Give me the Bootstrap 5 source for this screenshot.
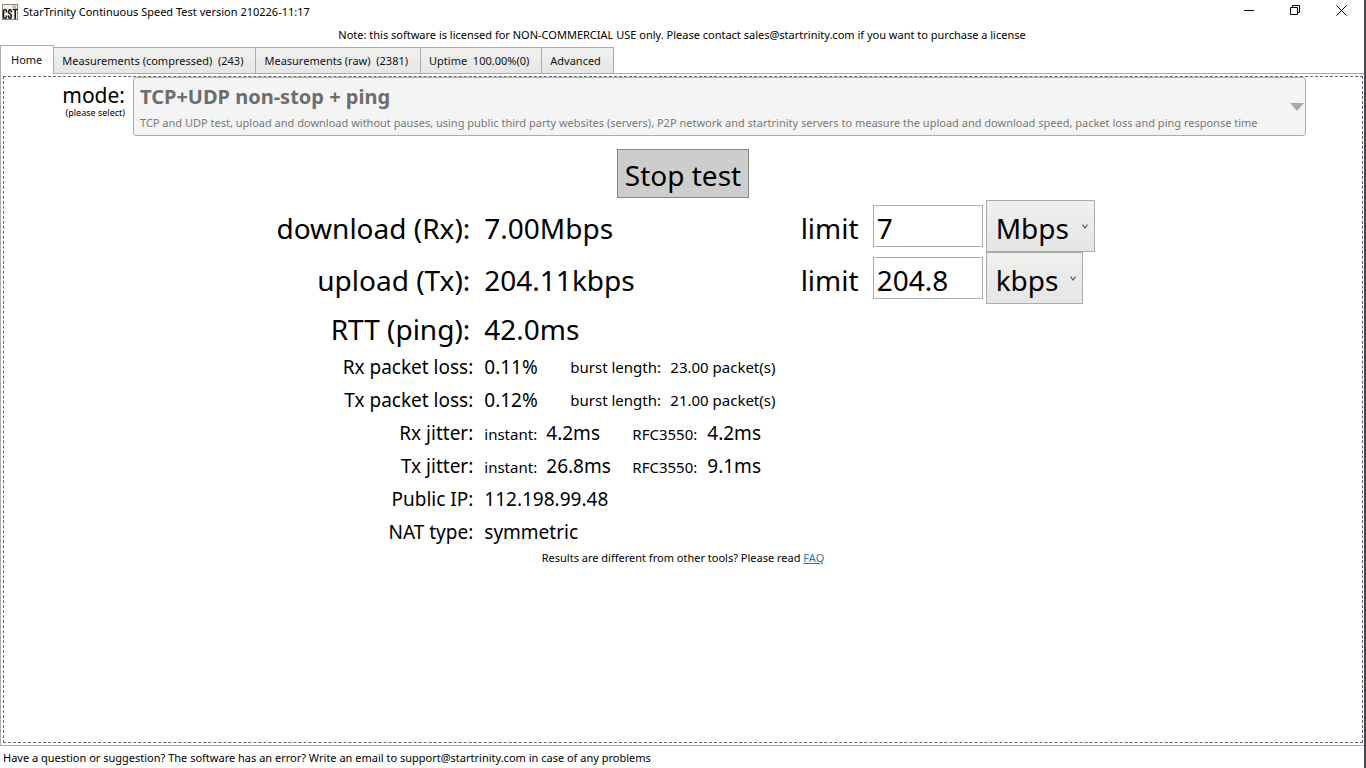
<!DOCTYPE html>
<html lang="en">
<head>
<meta charset="utf-8">
<meta name="viewport" content="width=device-width, initial-scale=1">
<title>StarTrinity Continuous Speed Test</title>
<link href="https://cdn.jsdelivr.net/npm/bootstrap@5.3.0/dist/css/bootstrap.min.css" rel="stylesheet">
<style>
  body { font-family: "Noto Sans", "Open Sans", sans-serif; font-size: 11px; line-height: 16px; color: #000; background: #fff; }
  .app-window { border-right: 2px solid #4a464e; }
  .title-bar { height: 24px; padding-left: 2px; }
  .win-btn { width: 46px; height: 21px; background: none; }
  .note { height: 21px; line-height: 21px; }

  .tab-strip { --bs-nav-tabs-border-width: 0; border-bottom: 1px solid #acacac; }
  .tab-strip .nav-link { height: 26px; padding: 0 12px 0 8px; line-height: 25px; font-size: 11px; color: #111; white-space: pre;
    border: 1px solid #acacac; border-left-width: 0; border-bottom: 0; border-radius: 0; background: linear-gradient(#f1f1ef, #e6e6e6); margin: 0; }
  .tab-strip .nav-link.active { height: 29px; line-height: 27px; padding: 0 11px 0 10px; border-left-width: 1px; border-color: #acacac; background: #fff; color: #111; margin-bottom: -1px; }
  .pane { border: solid #acacac; border-width: 0 0 1px 1px; padding: 2px 1px 2px 2px; }
  .pane-focus { border: 1px dashed #666; }

  .mode-name { width: 121px; }
  .mode-title { font-size: 21px; line-height: 24px; padding-top: 6px; }
  .mode-hint { font-size: 9px; line-height: 12px; }
  .mode-box { display: grid; margin-right: 56px; }
  .mode-box > * { grid-area: 1 / 1; }
  .mode-box select { height: 59px; padding: 0 30px 20px 6px; font-size: 20px; font-weight: 700; border: 1px solid #acacac; border-radius: 3px;
    background-image: url("data:image/svg+xml,%3Csvg xmlns='http://www.w3.org/2000/svg' viewBox='0 0 14 8'%3E%3Cpath d='M0 0h14L7 8z' fill='%23a9a9a9'/%3E%3C/svg%3E");
    background-position: right 1px center; background-size: 14px 8px; }
  .mode-box select:disabled { background-color: #f4f4f4; color: #6d6d6d; }
  .mode-desc { align-self: end; padding: 0 0 5px 7px; color: #787878; pointer-events: none; white-space: nowrap; }

  .stop-row { padding: 13px 0 2px; }
  .stop-btn { height: 49px; padding: 2px 7px 0; font-size: 28px; line-height: 40px; border: 1px solid #8d8585; border-radius: 0; background: #cdcdcd; color: #000; }
  .stat { display: grid; grid-template-columns: 35fr 23fr 42fr; align-items: center; height: 33px; font-size: 19px; line-height: 33px; }
  .stat > :first-child { text-align: right; padding-right: 6px; }
  .stat > :nth-child(2) { padding-left: 5px; white-space: nowrap; }
  .stat-lg { font-size: 28px; line-height: 48px; height: 52px; }
  .stat-lg > :first-child, .stat-lg > :nth-child(2), .limit label { padding-top: 4px; }
  .stat-lg > :first-child { padding-right: 9px; }
  .stat-ping { height: 47px; line-height: 41px; }
  .limit { padding-left: 9px; }
  .limit label { width: 72px; }
  .limit input { width: 110px; height: 42px; padding: 4px 3px 0; font-size: 28px; border: 1px solid #acacac; border-radius: 0; color: #000; }
  .limit select { height: 52px; margin-left: 3px; padding: 4px 0 0 9px; font-size: 28px; line-height: 40px; border: 1px solid #acacac; border-radius: 0; color: #000;
    background: url("data:image/svg+xml,%3Csvg xmlns='http://www.w3.org/2000/svg' viewBox='0 0 6 5'%3E%3Cpath d='M.5.5L3 4 5.500.5' fill='none' stroke='%23555' stroke-width='1.200'/%3E%3C/svg%3E") right 6px center / 6px 5px no-repeat, linear-gradient(#f0f0ef, #e5e5e5); }
  .unit-m { width: 109px; }
  .unit-k { width: 97px; }
  .sub { font-size: 15px; }
  .align-items-baseline .sub { line-height: 20px; }
  .w-value { width: 86px; }
  .w-burst { width: 100px; }
  .w-instant { width: 62px; }
  .w-rfc { width: 75px; }
  .faq { line-height: 18px; }
  .faq a { color: #2a78a8; }
  .foot { height: 22px; line-height: 23px; padding-left: 3px; }
</style>
</head>
<body>
<div class="app-window min-vh-100 d-flex flex-column">
  <header>
    <div class="title-bar d-flex align-items-center">
      <svg width="17" height="17" viewBox="0 0 17 17" aria-hidden="true">
        <rect x=".5" y=".5" width="15" height="15" fill="#f6f1ee" stroke="#8b8482"/>
        <path d="M10.500 1.500h3.500v2.500h-3.500z" fill="#d9b48c"/>
        <path d="M4.500 8.500V7.200Q4.500 5.500 3 5.500T1.500 7.200v5.500Q1.500 14.300 3 14.300T4.500 12.700V11.500M9.300 8.500V7.200Q9.300 5.500 8 5.500T6.700 7.200V8.200Q6.700 9.200 8 9.900T9.300 11.700v1Q9.300 14.300 8 14.300T6.700 12.700V11.500M10.800 5.500H15.500M13.200 5.500v9.500" fill="none" stroke="#1c1716" stroke-width="1.600"/>
      </svg>
      <span class="ms-1 flex-grow-1">StarTrinity Continuous Speed Test version 210226-11:17</span>
      <button type="button" class="win-btn border-0 p-0 d-flex justify-content-center align-items-center" aria-label="Minimize">
        <svg width="10" height="10"><path d="M0 3.500h10" stroke="#000"/></svg></button>
      <button type="button" class="win-btn border-0 p-0 d-flex justify-content-center align-items-center" aria-label="Restore">
        <svg width="10" height="14" fill="none" stroke="#000"><path d="M.5 2.500h7v7h-7zM2.500 2.500v-2h7v7h-2"/></svg></button>
      <button type="button" class="win-btn border-0 p-0 d-flex justify-content-center align-items-center" aria-label="Close">
        <svg width="11" height="15" stroke="#000"><path d="M.5.5l10 10M10.500.5l-10 10"/></svg></button>
    </div>
    <div class="note text-center">Note: this software is licensed for NON-COMMERCIAL USE only. Please contact sales@startrinity.com if you want to purchase a license</div>
  </header>

  <nav class="nav nav-tabs tab-strip align-items-end">
    <a class="nav-link active" href="#home">Home</a>
    <a class="nav-link" href="#compressed">Measurements (compressed)  (243)</a>
    <a class="nav-link" href="#raw">Measurements (raw)  (2381)</a>
    <a class="nav-link" href="#uptime">Uptime  100.00%(0)</a>
    <a class="nav-link" href="#advanced">Advanced</a>
  </nav>

  <main class="pane flex-grow-1 d-flex flex-column">
    <div class="pane-focus flex-grow-1" id="home">
      <div class="d-flex">
        <label class="mode-name text-end" for="mode">
          <span class="mode-title d-block">mode:</span>
          <span class="mode-hint d-block">(please select)</span>
        </label>
        <div class="mode-box flex-grow-1 ms-2">
          <select id="mode" class="form-select" aria-describedby="modeDesc" disabled><option>TCP+UDP non-stop + ping</option></select>
          <span id="modeDesc" class="mode-desc">TCP and UDP test, upload and download without pauses, using public third party websites (servers), P2P network and startrinity servers to measure the upload and download speed, packet loss and ping response time</span>
        </div>
      </div>

      <div class="stop-row d-flex justify-content-center">
        <button type="button" class="btn stop-btn">Stop test</button>
      </div>

      <div class="stat stat-lg">
        <span>download (Rx):</span><span>7.00Mbps</span>
        <div class="limit d-flex align-items-center">
          <label for="rxLimit">limit</label>
          <input id="rxLimit" type="text" class="form-control" value="7">
          <select class="form-select unit-m" aria-label="Download limit unit"><option>Mbps</option><option>kbps</option></select>
        </div>
      </div>
      <div class="stat stat-lg">
        <span>upload (Tx):</span><span>204.11kbps</span>
        <div class="limit d-flex align-items-center">
          <label for="txLimit">limit</label>
          <input id="txLimit" type="text" class="form-control" value="204.8">
          <select class="form-select unit-k" aria-label="Upload limit unit"><option>kbps</option><option>Mbps</option></select>
        </div>
      </div>
      <div class="stat stat-lg stat-ping"><span>RTT (ping):</span><span>42.0ms</span></div>

      <div class="stat"><span>Rx packet loss:</span>
        <div class="d-flex"><span class="w-value flex-shrink-0">0.11%</span><span class="sub w-burst flex-shrink-0">burst length:</span><span class="sub">23.00 packet(s)</span></div></div>
      <div class="stat"><span>Tx packet loss:</span>
        <div class="d-flex"><span class="w-value flex-shrink-0">0.12%</span><span class="sub w-burst flex-shrink-0">burst length:</span><span class="sub">21.00 packet(s)</span></div></div>
      <div class="stat"><span>Rx jitter:</span>
        <div class="d-flex align-items-baseline"><span class="sub w-instant flex-shrink-0">instant:</span><span class="w-value flex-shrink-0">4.2ms</span><span class="sub w-rfc flex-shrink-0">RFC3550:</span><span>4.2ms</span></div></div>
      <div class="stat"><span>Tx jitter:</span>
        <div class="d-flex align-items-baseline"><span class="sub w-instant flex-shrink-0">instant:</span><span class="w-value flex-shrink-0">26.8ms</span><span class="sub w-rfc flex-shrink-0">RFC3550:</span><span>9.1ms</span></div></div>
      <div class="stat"><span>Public IP:</span><span>112.198.99.48</span></div>
      <div class="stat"><span>NAT type:</span><span>symmetric</span></div>

      <div class="faq text-center">Results are different from other tools? Please read <a href="#faq">FAQ</a></div>
    </div>
  </main>

  <footer class="foot">Have a question or suggestion? The software has an error? Write an email to support@startrinity.com in case of any problems</footer>
</div>
<script src="https://cdn.jsdelivr.net/npm/bootstrap@5.3.0/dist/js/bootstrap.bundle.min.js"></script>
</body>
</html>
